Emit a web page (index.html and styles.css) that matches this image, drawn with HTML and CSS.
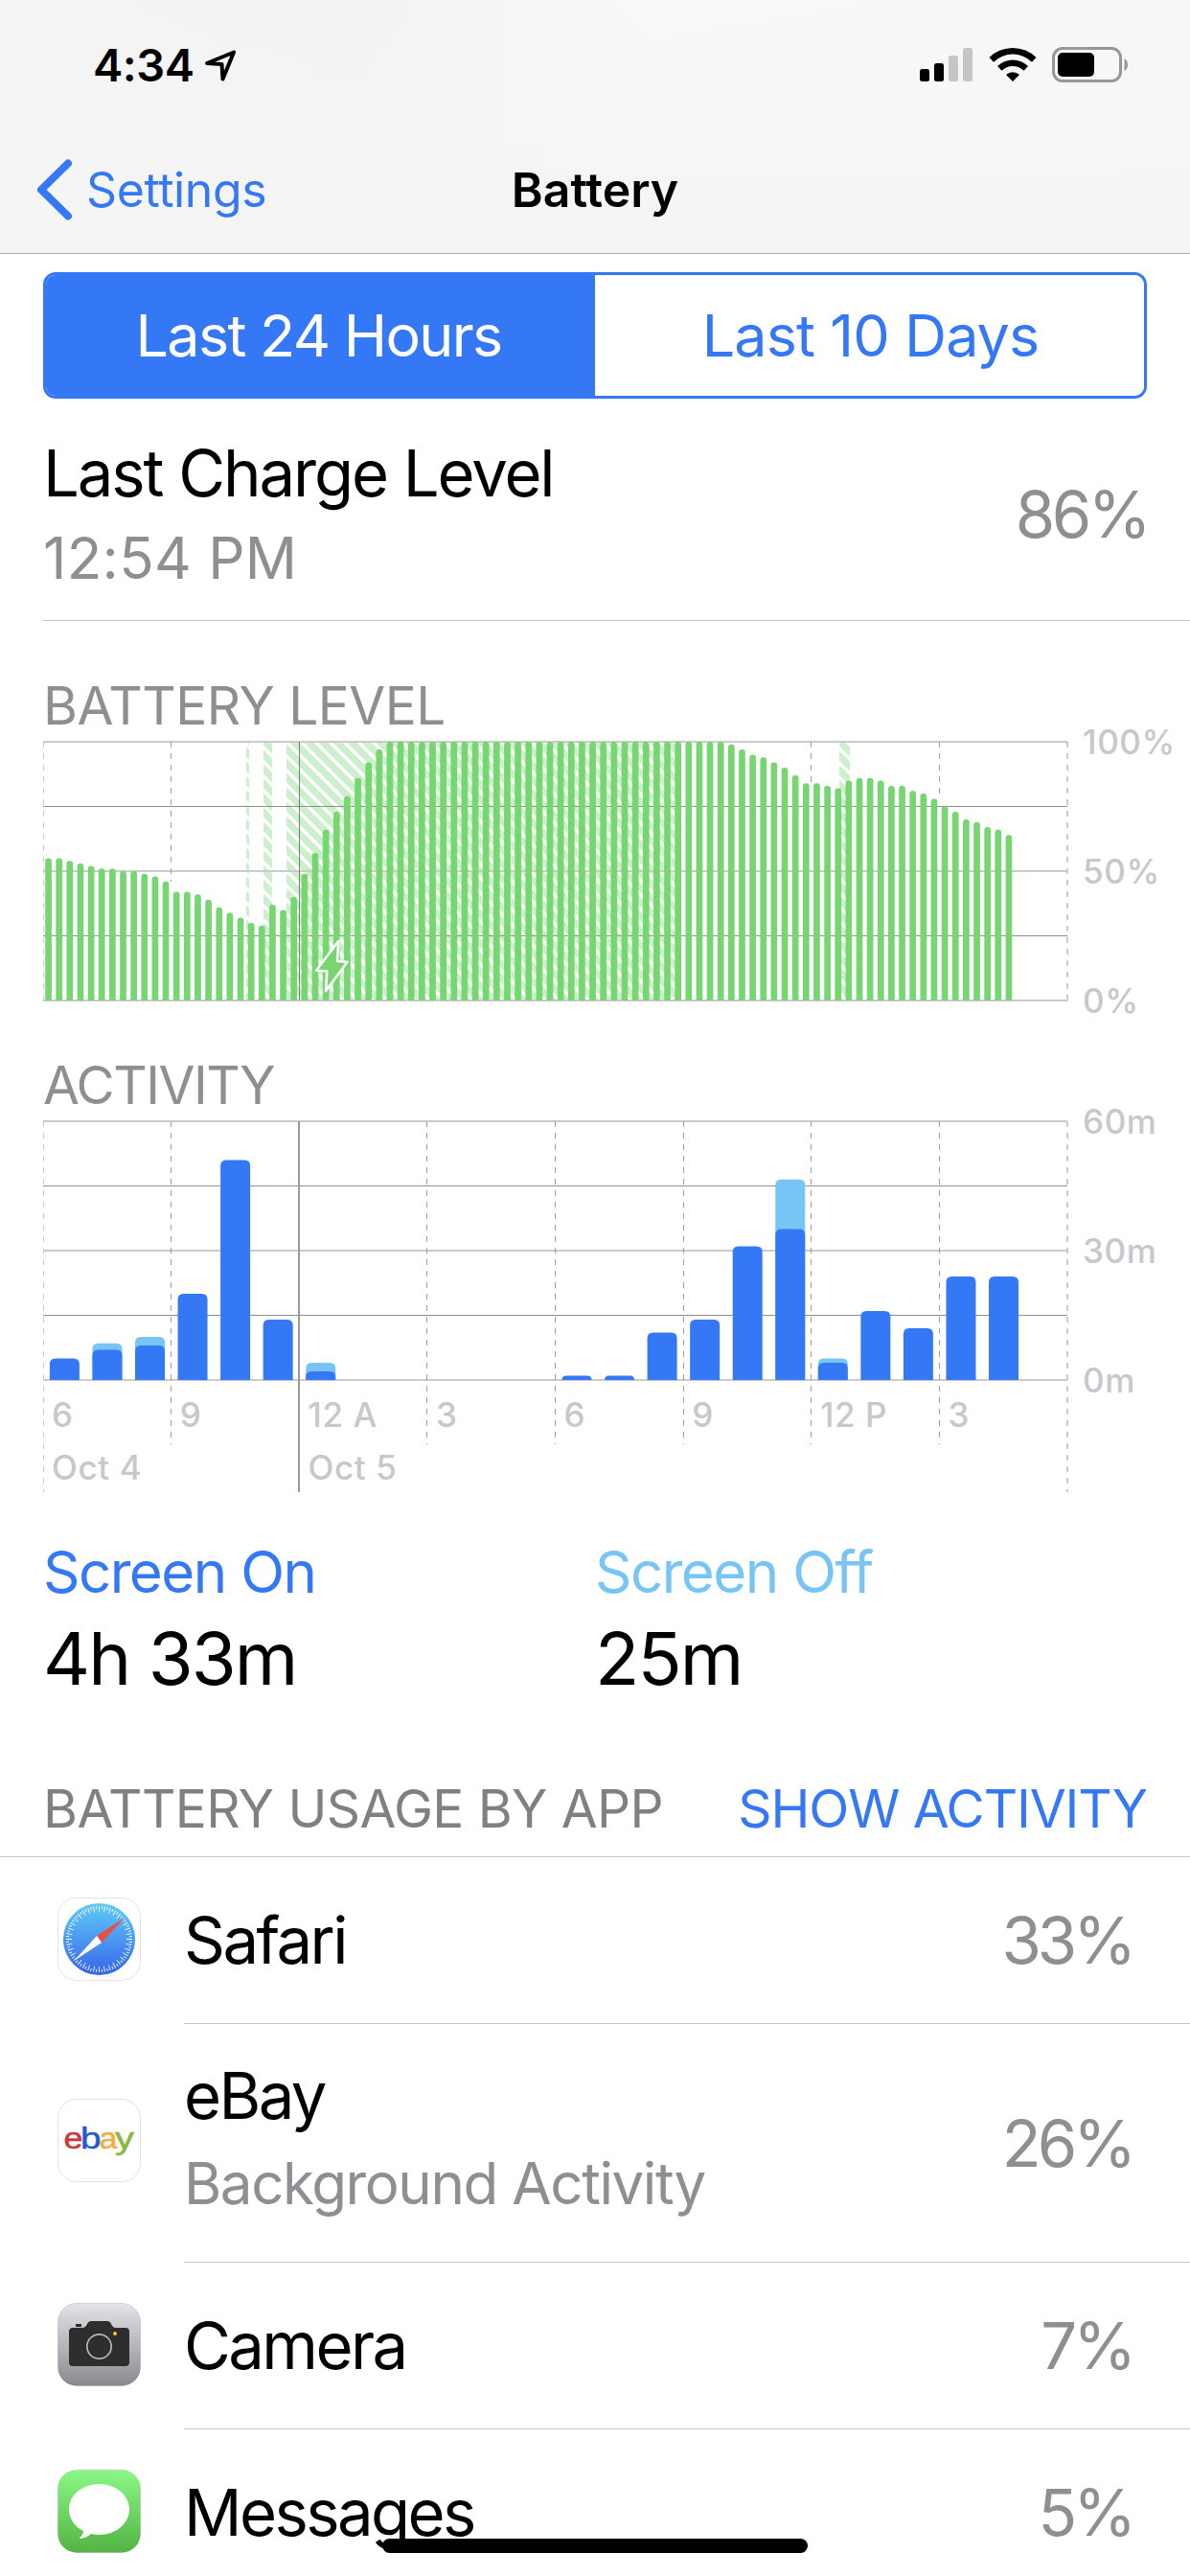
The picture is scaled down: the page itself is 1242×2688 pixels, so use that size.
FILE: index.html
```html
<!DOCTYPE html>
<html lang="en">
<head>
    <meta charset="utf-8">
    <title>Battery</title>
    <link rel="stylesheet" href="styles.css">
</head>
<body>
    <header class="header">
        <div class="status-bar">
            <div class="clock">
                <span class="time">4:34</span>
                <svg class="location" width="34" height="34" viewBox="0 0 34 34">
                    <path d="M3 15 L31 3.5 L19.5 31.5 L18.5 16 Z" fill="none" stroke="#000" stroke-width="4" stroke-linejoin="round"/>
                </svg>
            </div>
            <div class="indicators">
                <svg width="55" height="36" viewBox="0 0 55 36">
                    <rect x="0" y="22" width="10" height="13" rx="2.5"/>
                    <rect x="15" y="16" width="10" height="19" rx="2.5"/>
                    <rect x="30" y="8" width="10" height="27" rx="2.5" fill="#c6c6c6"/>
                    <rect x="45" y="0" width="10" height="35" rx="2.5" fill="#c6c6c6"/>
                </svg>
                <svg class="wifi" width="50" height="36" viewBox="0 0 50 36">
                    <path d="M0.5 11 A35 35 0 0 1 49.5 11 L45 15.8 A28.5 28.5 0 0 0 5 15.8 Z"/>
                    <path d="M9 20 A23 23 0 0 1 41 20 L36.5 24.7 A16.5 16.5 0 0 0 13.5 24.7 Z"/>
                    <path d="M18 29 A10.5 10.5 0 0 1 32 29 L25 36 Z"/>
                </svg>
                <svg class="battery" width="80" height="38" viewBox="0 0 80 38">
                    <rect x="1.5" y="1.5" width="70" height="34" rx="9.5" fill="none" stroke="#979797" stroke-width="3"/>
                    <rect x="6" y="6" width="38" height="25" rx="5"/>
                    <path d="M75.500 12 Q79 14 79 18.500 Q79 23 75.500 25 Z" fill="#979797"/>
                </svg>
            </div>
        </div>
        <nav class="nav">
            <a class="back">
                <svg width="38" height="64" viewBox="0 0 38 64">
                    <path d="M33 4.500 L5 32 L33 59.500" fill="none" stroke="#3478f6" stroke-width="8" stroke-linecap="round" stroke-linejoin="round"/>
                </svg>
                <span>Settings</span>
            </a>
            <h1>Battery</h1>
        </nav>
    </header>

    <main>
        <div class="segments">
            <button class="segment active">Last 24 Hours</button>
            <button class="segment">Last 10 Days</button>
        </div>

        <section class="charge">
            <div class="charge-text">
                <span class="charge-title">Last Charge Level</span>
                <span class="charge-time">12:54 PM</span>
            </div>
            <span class="charge-value">86%</span>
        </section>

        <section class="chart">
            <h2>BATTERY LEVEL</h2>
            <svg id="level" width="1242" height="300" viewBox="0 0 1242 300"></svg>
        </section>
        <section class="chart">
            <h2 class="tight">ACTIVITY</h2>
            <svg id="activity" width="1242" height="404" viewBox="0 0 1242 404"></svg>
        </section>

        <section class="totals">
            <div class="total">
                <span class="total-label on">Screen On</span>
                <span class="total-value">4h 33m</span>
            </div>
            <div class="total">
                <span class="total-label off">Screen Off</span>
                <span class="total-value">25m</span>
            </div>
        </section>

        <section class="usage">
            <div class="usage-head">
                <span class="usage-title">BATTERY USAGE BY APP</span>
                <a class="usage-link">SHOW ACTIVITY</a>
            </div>
            <div class="app">
                <svg class="icon" width="87" height="87" viewBox="0 0 87 87">
                    <defs>
                        <linearGradient id="sky" x1="0" y1="0" x2="0" y2="1">
                            <stop offset="0" stop-color="#5fcbf7"/>
                            <stop offset="1" stop-color="#3566ea"/>
                        </linearGradient>
                    </defs>
                    <rect x=".5" y=".5" width="86" height="86" rx="19.5" fill="#fff" stroke="#e3e3e3"/>
                    <circle cx="43.500" cy="43.500" r="37.500" fill="url(#sky)"/>
                    <circle cx="43.500" cy="43.500" r="31.500" fill="none" stroke="#fff" stroke-width="6" pathLength="360" stroke-dasharray="1.600 8.400" stroke-dashoffset=".8"/>
                    <circle cx="43.500" cy="43.500" r="33" fill="none" stroke="#fff" stroke-width="3" pathLength="360" stroke-dasharray="1.600 8.400" stroke-dashoffset="5.800"/>
                    <path d="M70 21 L46.200 46.900 L41 40 Z" fill="#ec4e3d"/>
                    <path d="M17.300 66 L41 40 L46.200 46.900 Z" fill="#fff"/>
                </svg>
                <div class="app-body">
                    <span class="app-name">Safari</span>
                    <span class="app-value">33%</span>
                </div>
            </div>
            <div class="app tall">
                <svg class="icon" width="87" height="87" viewBox="0 0 87 87">
                    <rect x=".5" y=".5" width="86" height="86" rx="19.5" fill="#fff" stroke="#e3e3e3"/>
                    <g class="ebay">
                        <text x="6.500" y="51.500" textLength="20" lengthAdjust="spacingAndGlyphs" fill="#d0343a" stroke="#d0343a">e</text>
                        <text x="24" y="51.500" textLength="21.500" lengthAdjust="spacingAndGlyphs" fill="#2559cf" stroke="#2559cf">b</text>
                        <text x="43.500" y="51.500" textLength="19" lengthAdjust="spacingAndGlyphs" fill="#efaf41" stroke="#efaf41">a</text>
                        <text x="60" y="51.500" textLength="20" lengthAdjust="spacingAndGlyphs" fill="#8ab73e" stroke="#8ab73e">y</text>
                    </g>
                </svg>
                <div class="app-body">
                    <div class="app-text">
                        <span class="app-name">eBay</span>
                        <span class="app-note">Background Activity</span>
                    </div>
                    <span class="app-value">26%</span>
                </div>
            </div>
            <div class="app">
                <svg class="icon" width="87" height="87" viewBox="0 0 87 87">
                    <defs>
                        <linearGradient id="metal" x1="0" y1="0" x2="0" y2="1">
                            <stop offset="0" stop-color="#e4e3e9"/>
                            <stop offset="1" stop-color="#8a898e"/>
                        </linearGradient>
                    </defs>
                    <rect x=".5" y=".5" width="86" height="86" rx="19.5" fill="url(#metal)" stroke="#000" stroke-opacity=".12"/>
                    <rect x="19" y="22" width="6" height="3" fill="#2e2e2e"/>
                    <path d="M16 26 H26 Q29 26 30.500 23 Q32 19 35 19 H52 Q55 19 56.500 23 Q58 26 60 26 H71 Q75 26 75 30 V62 Q75 66 71 66 H16 Q12 66 12 62 V30 Q12 26 16 26 Z" fill="#2e2e2e"/>
                    <circle cx="43.500" cy="45.500" r="12.700" fill="none" stroke="#b9b8bc" stroke-width="1.700"/>
                    <circle cx="60" cy="32" r="2" fill="#f5c747"/>
                </svg>
                <div class="app-body">
                    <span class="app-name">Camera</span>
                    <span class="app-value">7%</span>
                </div>
            </div>
            <div class="app">
                <svg class="icon" width="87" height="87" viewBox="0 0 87 87">
                    <defs>
                        <linearGradient id="green" x1="0" y1="0" x2="0" y2="1">
                            <stop offset="0" stop-color="#8bf787"/>
                            <stop offset="1" stop-color="#53b442"/>
                        </linearGradient>
                    </defs>
                    <rect x=".5" y=".5" width="86" height="86" rx="19.5" fill="url(#green)" stroke="#000" stroke-opacity=".1"/>
                    <path d="M43.500 15 C61 15 75 26.500 75 41.500 C75 56 61 68 43.500 68 Q39 68 35 67 Q30 71.500 23.500 72 Q22.500 71.500 23.500 70.500 Q27 67.500 27 64 C18 59.500 12 51 12 41.500 C12 26.500 26 15 43.500 15 Z" fill="#fff"/>
                </svg>
                <div class="app-body">
                    <span class="app-name">Messages</span>
                    <span class="app-value">5%</span>
                </div>
            </div>
        </section>
    </main>
    <div class="home-bar"></div>
    <script src="script.js"></script>
</body>
</html>
```
FILE: styles.css
```css
* {
    box-sizing: border-box;
}
body {
    margin: 0;
    width: 1242px;
    height: 2688px;
    overflow: hidden;
    background: #fff;
    color: #000;
    font-family: Inter, "Liberation Sans", sans-serif;
}
svg {
    display: block;
}

/* Header */
.header {
    height: 265px;
    border-bottom: 1px solid #b2b2b2;
    background: linear-gradient(to bottom, rgba(245,245,245,0), #f5f5f5 75%), linear-gradient(to right, #f4f4f4, #f2f2f2 30%, #f9f9f9 55%, #f7f7f7);
}
.status-bar {
    height: 136px;
    padding: 0 64px 0 97px;
    display: flex;
    justify-content: space-between;
    align-items: center;
}
.clock, .indicators {
    display: flex;
    align-items: center;
}
.time {
    font-size: 47px;
    font-weight: 600;
    line-height: 60px;
    letter-spacing: -0.5px;
}
.location {
    margin-left: 10px;
}
.wifi {
    margin: 0 0 3px 17px;
}
.battery {
    margin-left: 16px;
}
.nav {
    height: 124px;
    padding: 0 38px;
    display: grid;
    grid-template-columns: 1fr auto 1fr;
    align-items: center;
}
.back {
    display: flex;
    align-items: center;
    gap: 14px;
    color: #3478f6;
    font-size: 50px;
    line-height: 60px;
    letter-spacing: -0.4px;
}
h1 {
    margin: 0;
    font-size: 50px;
    font-weight: 600;
    line-height: 60px;
}

/* Segmented control */
.segments {
    display: grid;
    grid-template-columns: 1fr 1fr;
    height: 132px;
    margin: 19px 45px 0;
    border: 3px solid #3478f6;
    border-radius: 13px;
    overflow: hidden;
}
.segment {
    border: 0;
    padding: 0 0 0 2px;
    background: #fff;
    color: #3478f6;
    font-family: inherit;
    font-size: 61px;
    letter-spacing: -0.9px;
}
.segment.active {
    padding: 0 4px 0 0;
    background: #3478f6;
    color: #fff;
    letter-spacing: -1.7px;
}

/* Last charge */
.charge {
    display: flex;
    justify-content: space-between;
    align-items: center;
    margin-left: 45px;
    padding: 36px 44px 23px 0;
    border-bottom: 1px solid #c8c7cc;
}
.charge-text {
    display: flex;
    flex-direction: column;
    gap: 4px;
    line-height: 84px;
}
.charge-title, .charge-value {
    font-size: 67px;
}
.charge-title {
    letter-spacing: -2.1px;
}
.charge-time {
    font-size: 60px;
    letter-spacing: 0.3px;
}
.charge-time, .charge-value {
    color: #8e8e93;
}
.charge-value {
    margin-bottom: 3px;
    letter-spacing: -3.5px;
}

/* Charts */
.chart h2 {
    margin: 0;
    padding-left: 45px;
    font-size: 55px;
    font-weight: 400;
    line-height: 48px;
    letter-spacing: -0.5px;
    color: #8e8e93;
}
.chart .tight {
    letter-spacing: -1.5px;
}
.chart svg {
    overflow: visible;
}
.charge + .chart {
    margin-top: 64px;
}
.chart + .chart {
    margin-top: 48px;
}
.axis {
    font-size: 35px;
    font-weight: 500;
    letter-spacing: 0.6px;
    fill: #c7c7cc;
}

/* Totals */
.totals {
    display: grid;
    grid-template-columns: 1fr 1fr;
    margin: 44px 45px 0;
}
.total {
    display: flex;
    flex-direction: column;
    gap: 9px;
}
.total-label {
    font-size: 60px;
    line-height: 72px;
    letter-spacing: -1.5px;
}
.total-value {
    font-size: 76px;
    line-height: 91px;
    letter-spacing: -1.9px;
}
.on {
    color: #3478f6;
}
.off {
    color: #78c4f5;
}

/* Apps */
.usage-head {
    display: flex;
    justify-content: space-between;
    height: 101px;
    margin-top: 61px;
    padding: 0 45px;
    border-bottom: 1px solid #c8c7cc;
    font-size: 55px;
    line-height: 100px;
}
.usage-title {
    letter-spacing: -0.6px;
    color: #808080;
}
.usage-link {
    letter-spacing: -1.1px;
    color: #3478f6;
}
.app {
    display: flex;
    padding-left: 60px;
    height: 174px;
}
.app.tall {
    height: 249px;
}
.icon {
    flex: none;
    align-self: center;
    margin: 0 45px 3px 0;
}
.tall .icon {
    margin-bottom: 6px;
}
.app-body {
    flex: 1;
    display: flex;
    justify-content: space-between;
    align-items: center;
    padding-right: 60px;
    border-bottom: 1px solid #c8c7cc;
}
.app:last-child .app-body {
    border-bottom: 0;
}
.app-text {
    display: flex;
    flex-direction: column;
    gap: 7px;
    padding-bottom: 7px;
}
.app-name, .app-value {
    font-size: 67px;
    line-height: 84px;
    letter-spacing: -2.6px;
}
.app-value {
    letter-spacing: -4px;
    color: #8e8e93;
}
.tall .app-value {
    margin-top: 2px;
}
.app-note {
    font-size: 60px;
    line-height: 84px;
    letter-spacing: -1.4px;
    color: #8e8e93;
}
.ebay {
    font: 31px "Liberation Sans", sans-serif;
    stroke-width: 0.5px;
}
.home-bar {
    position: absolute;
    left: 399px;
    top: 2649px;
    width: 444px;
    height: 15px;
    border-radius: 8px;
    background: #000;
}
```
FILE: script.js
```js
var LEFT = 45, RIGHT = 1114, HEIGHT = 270;

// battery level in percent, one value per 15 minutes
var levels = [55, 55, 54, 53, 52, 51, 51, 50, 50, 49, 48, 46, 42, 42, 41, 39, 36, 34, 32, 30, 29, 37, 35, 40,
    49, 57, 66, 73, 79, 86, 92, 97];
for (var i = 0; i < 32; i++) levels.push(100);
levels = levels.concat([99, 97, 95, 94, 92, 90, 87, 84, 84, 83, 82, 85, 86, 86, 85, 83, 83, 81, 80, 78, 75, 73, 70, 69, 67, 66, 64]);

// charging periods: [x, width]
var charging = [[257, 3], [275, 9], [299, 406], [876, 11]];

// minutes per hour: [screen on, total]
var hours = [[5, 5], [7, 8.5], [8, 10], [20, 20], [51, 51], [14, 14], [2, 4], 0, 0, 0, 0, 0,
    [1, 1], [1, 1], [11, 11], [14, 14], [31, 31], [35, 46.5], [4, 5], [16, 16], [12, 12], [24, 24], [24, 24]];

function grid(top) {
    var s = '';
    for (var i = 0; i < 5; i++) {
        var y = top + i * HEIGHT / 4;
        if (i % 2) s += '<rect x="45" y="' + Math.floor(y) + '" width="1069" height="1" fill="#8f8f8f"/>';
        else s += '<rect x="45" y="' + (y - 1) + '" width="1069" height="2" fill="#cbcbcb"/>';
    }
    return s;
}

function dashed(i, y1, y2) {
    var x = LEFT + i * (RIGHT - LEFT) / 8;
    var edge = i == 0 || i == 8;
    var px = i == 0 ? 45.5 : i == 8 ? 1114 : Math.floor(x) + 0.5;
    return '<line x1="' + px + '" x2="' + px + '" y1="' + y1 + '" y2="' + y2 + '" stroke="' + (edge ? '#cbcbcb' : '#9d9d9d') +
        '" stroke-width="' + (i == 8 ? 2 : 1) + '" stroke-dasharray="6 6"/>';
}

function label(x, mid, text) {
    return '<text class="axis" x="' + x + '" y="' + (mid + 12.7) + '">' + text + '</text>';
}

// rounded on top, square at the base
function bar(x, base, w, h, r, fill) {
    r = Math.min(r, h);
    var t = base - h;
    return '<path fill="' + fill + '" d="M' + x + ' ' + base + 'V' + (t + r) + 'Q' + x + ' ' + t + ' ' + (x + r) + ' ' + t +
        'H' + (x + w - r) + 'Q' + (x + w) + ' ' + t + ' ' + (x + w) + ' ' + (t + r) + 'V' + base + 'Z"/>';
}

function drawLevel() {
    var top = 14, base = top + HEIGHT;
    var s = '<defs><pattern id="hatch" width="15" height="15" patternUnits="userSpaceOnUse">' +
        '<rect width="15" height="15" fill="#cbf0cb"/>' +
        '<path d="M-5 -5L20 20M-5 10L5 20M10 -5L20 5" stroke="#fff" stroke-width="3.600"/></pattern></defs>';
    charging.forEach(function (c) {
        s += '<rect x="' + c[0] + '" y="' + top + '" width="' + c[1] + '" height="' + HEIGHT + '" fill="url(#hatch)"/>';
    });
    s += grid(top);
    s += dashed(0, top, base) + dashed(1, top, 160) + dashed(6, top, 56) + dashed(7, top, 68) + dashed(8, top, base);
    levels.forEach(function (v, i) {
        s += bar(LEFT + i * 11.1375 + 2.2, base, 6.7, v * 2.7, 3.3, '#77d572');
    });
    s += '<rect x="312" y="' + top + '" width="1" height="270" fill="#7c7c7c"/>';
    s += '<path d="M353.300 222L352 243L362.500 243.800L340 274L341.300 253.300L330 252.800Z" fill="#77d572" stroke="#fff" stroke-width="2.500" stroke-linejoin="round"/>';
    s += label(1130, 14, '100%') + label(1130, 149, '50%') + label(1130, 284, '0%');
    document.getElementById('level').innerHTML = s;
}

function drawActivity() {
    var top = 14, base = top + HEIGHT;
    var s = grid(top);
    [0, 1, 3, 4, 5, 6, 7, 8].forEach(function (i) {
        s += dashed(i, top, i % 8 ? 351 : 401);
    });
    s += '<rect x="311" y="14" width="2" height="387" fill="#9a9a9a"/>';
    hours.forEach(function (h, i) {
        if (!h) return;
        var x = LEFT + i * 44.55 + 6.9;
        if (h[1] > h[0]) s += bar(x, base, 31, h[1] * 4.5, 6, '#78c4f5');
        s += bar(x, base, 31, h[0] * 4.5, 6, '#3478f6');
    });
    ['6', '9', '12 A', '3', '6', '9', '12 P', '3'].forEach(function (t, i) {
        s += label(LEFT + i * 133.65 + 9, 320, t);
    });
    s += label(54, 375.500, 'Oct 4') + label(321.500, 375.500, 'Oct 5');
    s += label(1130, 14, '60m') + label(1130, 149, '30m') + label(1130, 284, '0m');
    document.getElementById('activity').innerHTML = s;
}

drawLevel();
drawActivity();
```
